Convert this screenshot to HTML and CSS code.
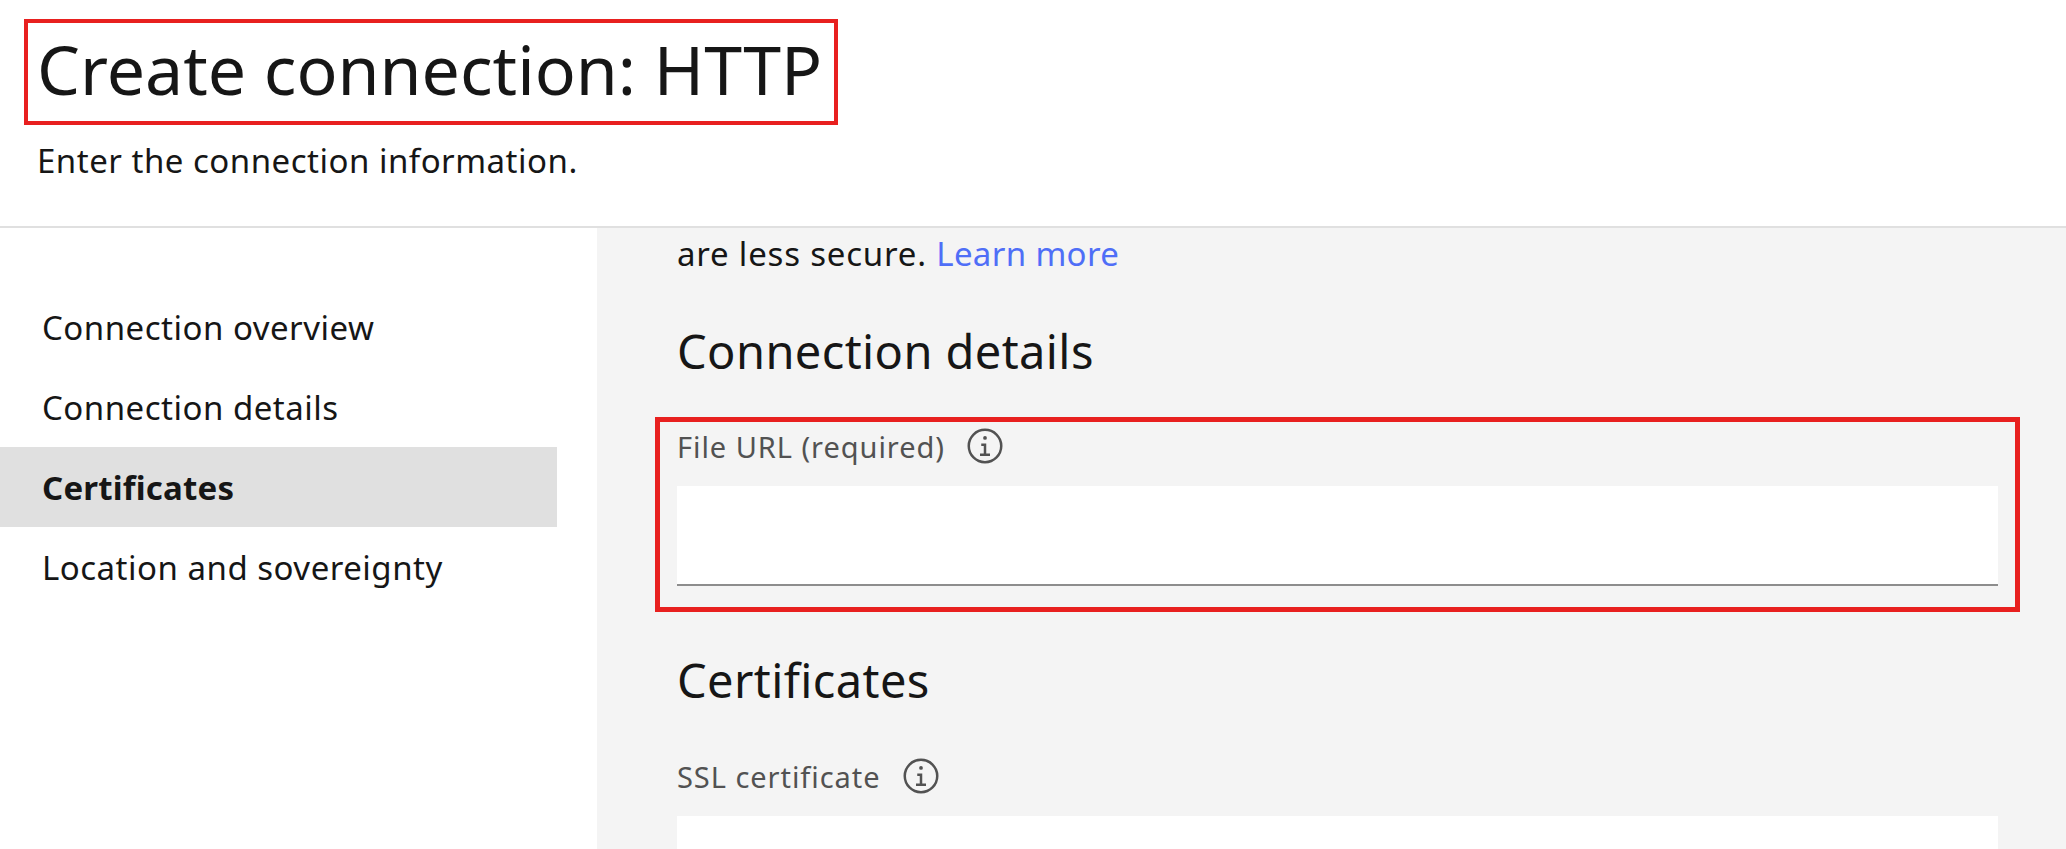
FILE: index.html
```html
<!DOCTYPE html>
<html lang="en">
<head>
<meta charset="utf-8">
<title>Create connection: HTTP</title>
<link rel="stylesheet" href="styles.css">
</head>
<body>
<header class="page-header">
  <h1 class="page-title">Create connection: HTTP</h1>
  <p class="page-subtitle">Enter the connection information.</p>
</header>
<div class="layout">
  <nav class="side-nav">
    <a class="nav-item">Connection overview</a>
    <a class="nav-item">Connection details</a>
    <a class="nav-item is-active">Certificates</a>
    <a class="nav-item">Location and sovereignty</a>
  </nav>
  <main class="content">
    <p class="intro">are less secure. <a class="link">Learn more</a></p>
    <h2 class="section-title first">Connection details</h2>
    <div class="field highlighted">
      <div class="field-label"><span>File URL (required)</span>
        <svg class="info-icon" viewBox="0 0 32 32"><path d="M17 22v-8h-4v2h2v6h-3v2h8v-2h-3z"/><path d="M16 8a1.5 1.5 0 1 0 1.5 1.5A1.5 1.5 0 0 0 16 8z"/><path d="M16 30a14 14 0 1 1 14-14 14 14 0 0 1-14 14zm0-26a12 12 0 1 0 12 12A12 12 0 0 0 16 4z"/></svg>
      </div>
      <div class="text-input"></div>
    </div>
    <h2 class="section-title second">Certificates</h2>
    <div class="field">
      <div class="field-label"><span>SSL certificate</span>
        <svg class="info-icon" viewBox="0 0 32 32"><path d="M17 22v-8h-4v2h2v6h-3v2h8v-2h-3z"/><path d="M16 8a1.5 1.5 0 1 0 1.5 1.5A1.5 1.5 0 0 0 16 8z"/><path d="M16 30a14 14 0 1 1 14-14 14 14 0 0 1-14 14zm0-26a12 12 0 1 0 12 12A12 12 0 0 0 16 4z"/></svg>
      </div>
      <div class="text-input"></div>
    </div>
  </main>
</div>
</body>
</html>
```
FILE: styles.css
```css
* { box-sizing: border-box; }
html, body { margin: 0; height: 849px; overflow: hidden; }
body { background: #fff; color: #161616; font-family: "Noto Sans", "Liberation Sans", sans-serif; }
.page-header { height: 228px; padding: 19px 0 0 24px; border-bottom: 2px solid #e0e0e0; }
.page-title { display: block; margin: 0; width: 814px; height: 106px; padding-left: 9px; border: 4px solid #e8201f; font-size: 68px; font-weight: 400; letter-spacing: 0; line-height: 92px; white-space: nowrap; }
.page-subtitle { margin: 13px 0 0 13px; font-size: 33px; letter-spacing: 0.5px; line-height: 46px; }
.layout { display: flex; height: 621px; }
.side-nav { flex: 0 0 597px; padding: 59px 40px 0 0; }
.nav-item { display: flex; align-items: center; height: 80px; padding-left: 42px; font-size: 33px; letter-spacing: 0.5px; }
.nav-item.is-active { background: #e0e0e0; font-weight: 700; letter-spacing: 0.2px; }
.content { flex: 1; padding: 0 68px 0 80px; background: #f4f4f4; overflow: hidden; }
.intro { margin: 0; height: 50px; font-size: 33px; letter-spacing: 0.8px; line-height: 52px; }
.link { color: #4f6ef7; letter-spacing: 0.35px; }
.section-title { margin: 0; font-size: 47px; font-weight: 400; letter-spacing: 0.4px; line-height: 58px; }
.section-title.first { margin-top: 44px; }
.section-title.second { margin-top: 39px; }
.field { margin-top: 43px; }
.field.highlighted { margin: 37px -22px 0; padding: 0 17px 21px; width: 1365px; border: 5px solid #e8201f; }
.field-label { display: flex; align-items: center; height: 48px; margin-bottom: 16px; gap: 20px; color: #525252; font-size: 29px; letter-spacing: 0.95px; }
.info-icon { width: 40px; height: 40px; fill: #525252; }
.text-input { height: 100px; background: #fff; border-bottom: 2px solid #8d8d8d; }
```
